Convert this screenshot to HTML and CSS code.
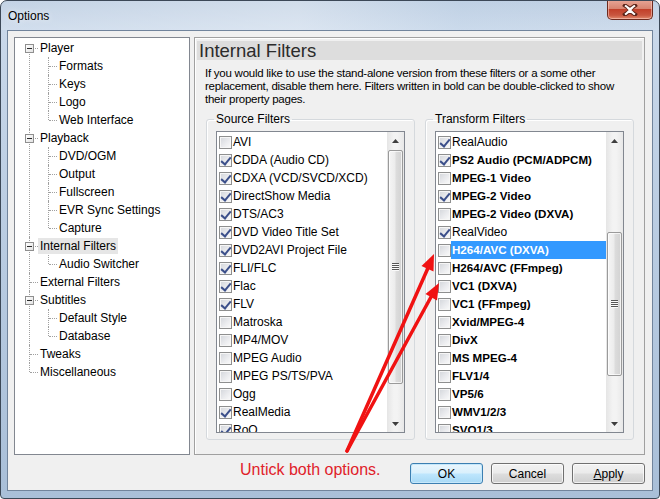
FILE: index.html
```html
<!DOCTYPE html>
<html>
<head>
<meta charset="utf-8">
<title>Options</title>
<link rel="stylesheet" href="styles.css">
</head>
<body>
<div class="window">
  <div class="titlebar">
    <span class="title">Options</span>
    <button class="close" aria-label="Close">
      <svg width="16" height="12" viewBox="0 0 16 12"><path d="M3 1.5 L8 5 L13 1.5 M3 10.5 L8 7 L13 10.5" fill="none" stroke="#5a2318" stroke-width="4" stroke-linecap="square"/><path d="M3 1.5 L8 5 L13 1.5 M3 10.5 L8 7 L13 10.5 M4 2 L12 10 M12 2 L4 10" fill="none" stroke="#fff" stroke-width="2"/></svg>
    </button>
  </div>
  <div class="client">
    <div class="main">
      <div class="treebox">
        <ul class="tree">
          <li><span class="exp"></span><div class="row"><span class="label">Player</span></div>
            <ul class="sub">
              <li><div class="row"><span class="label">Formats</span></div></li>
              <li><div class="row"><span class="label">Keys</span></div></li>
              <li><div class="row"><span class="label">Logo</span></div></li>
              <li><div class="row"><span class="label">Web Interface</span></div></li>
            </ul>
          </li>
          <li><span class="exp"></span><div class="row"><span class="label">Playback</span></div>
            <ul class="sub">
              <li><div class="row"><span class="label">DVD/OGM</span></div></li>
              <li><div class="row"><span class="label">Output</span></div></li>
              <li><div class="row"><span class="label">Fullscreen</span></div></li>
              <li><div class="row"><span class="label">EVR Sync Settings</span></div></li>
              <li><div class="row"><span class="label">Capture</span></div></li>
            </ul>
          </li>
          <li><span class="exp"></span><div class="row"><span class="label selected">Internal Filters</span></div>
            <ul class="sub">
              <li><div class="row"><span class="label">Audio Switcher</span></div></li>
            </ul>
          </li>
          <li><div class="row"><span class="label">External Filters</span></div></li>
          <li><span class="exp"></span><div class="row"><span class="label">Subtitles</span></div>
            <ul class="sub">
              <li><div class="row"><span class="label">Default Style</span></div></li>
              <li><div class="row"><span class="label">Database</span></div></li>
            </ul>
          </li>
          <li><div class="row"><span class="label">Tweaks</span></div></li>
          <li><div class="row"><span class="label">Miscellaneous</span></div></li>
        </ul>
      </div>
      <div class="panel">
        <div class="panel-head">Internal Filters</div>
        <p class="desc">If you would like to use the stand-alone version from these filters or a some other<br>replacement, disable them here. Filters written in bold can be double-clicked to show<br>their property pages.</p>
        <div class="groups">
          <fieldset class="group">
            <legend>Source Filters</legend>
            <div class="list">
              <div class="items">
                <div class="item"><span class="cb"></span><span class="text">AVI</span></div>
                <div class="item"><span class="cb on"></span><span class="text">CDDA (Audio CD)</span></div>
                <div class="item"><span class="cb on"></span><span class="text">CDXA (VCD/SVCD/XCD)</span></div>
                <div class="item"><span class="cb on"></span><span class="text">DirectShow Media</span></div>
                <div class="item"><span class="cb on"></span><span class="text">DTS/AC3</span></div>
                <div class="item"><span class="cb on"></span><span class="text">DVD Video Title Set</span></div>
                <div class="item"><span class="cb on"></span><span class="text">DVD2AVI Project File</span></div>
                <div class="item"><span class="cb on"></span><span class="text">FLI/FLC</span></div>
                <div class="item"><span class="cb on"></span><span class="text">Flac</span></div>
                <div class="item"><span class="cb on"></span><span class="text">FLV</span></div>
                <div class="item"><span class="cb"></span><span class="text">Matroska</span></div>
                <div class="item"><span class="cb"></span><span class="text">MP4/MOV</span></div>
                <div class="item"><span class="cb"></span><span class="text">MPEG Audio</span></div>
                <div class="item"><span class="cb"></span><span class="text">MPEG PS/TS/PVA</span></div>
                <div class="item"><span class="cb"></span><span class="text">Ogg</span></div>
                <div class="item"><span class="cb on"></span><span class="text">RealMedia</span></div>
                <div class="item"><span class="cb on"></span><span class="text">RoQ</span></div>
              </div>
              <div class="sb">
                <div class="sb-btn"><svg width="7" height="4" viewBox="0 0 7 4"><path d="M0 4 L3.5 0 L7 4 Z" fill="#3e3e3e"/></svg></div>
                <div class="sb-track"><div class="thumb" style="margin-top:1px;height:234px"><span class="grip"></span></div></div>
                <div class="sb-btn"><svg width="7" height="4" viewBox="0 0 7 4"><path d="M0 0 L7 0 L3.5 4 Z" fill="#3e3e3e"/></svg></div>
              </div>
            </div>
          </fieldset>
          <fieldset class="group">
            <legend>Transform Filters</legend>
            <div class="list">
              <div class="items">
                <div class="item"><span class="cb on"></span><span class="text">RealAudio</span></div>
                <div class="item bold"><span class="cb on"></span><span class="text">PS2 Audio (PCM/ADPCM)</span></div>
                <div class="item bold"><span class="cb"></span><span class="text">MPEG-1 Video</span></div>
                <div class="item bold"><span class="cb on"></span><span class="text">MPEG-2 Video</span></div>
                <div class="item bold"><span class="cb"></span><span class="text">MPEG-2 Video (DXVA)</span></div>
                <div class="item"><span class="cb on"></span><span class="text">RealVideo</span></div>
                <div class="item bold selected"><span class="cb"></span><span class="text">H264/AVC (DXVA)</span></div>
                <div class="item bold"><span class="cb"></span><span class="text">H264/AVC (FFmpeg)</span></div>
                <div class="item bold"><span class="cb"></span><span class="text">VC1 (DXVA)</span></div>
                <div class="item bold"><span class="cb"></span><span class="text">VC1 (FFmpeg)</span></div>
                <div class="item bold"><span class="cb"></span><span class="text">Xvid/MPEG-4</span></div>
                <div class="item bold"><span class="cb"></span><span class="text">DivX</span></div>
                <div class="item bold"><span class="cb"></span><span class="text">MS MPEG-4</span></div>
                <div class="item bold"><span class="cb"></span><span class="text">FLV1/4</span></div>
                <div class="item bold"><span class="cb"></span><span class="text">VP5/6</span></div>
                <div class="item bold"><span class="cb"></span><span class="text">WMV1/2/3</span></div>
                <div class="item bold"><span class="cb"></span><span class="text">SVQ1/3</span></div>
              </div>
              <div class="sb">
                <div class="sb-btn"><svg width="7" height="4" viewBox="0 0 7 4"><path d="M0 4 L3.5 0 L7 4 Z" fill="#3e3e3e"/></svg></div>
                <div class="sb-track"><div class="thumb" style="margin-top:83px;height:144px"><span class="grip"></span></div></div>
                <div class="sb-btn"><svg width="7" height="4" viewBox="0 0 7 4"><path d="M0 0 L7 0 L3.5 4 Z" fill="#3e3e3e"/></svg></div>
              </div>
            </div>
          </fieldset>
        </div>
      </div>
    </div>
    <div class="footer">
      <span class="note">Untick both options.</span>
      <div class="buttons">
        <button class="btn default">OK</button>
        <button class="btn">Cancel</button>
        <button class="btn"><u>A</u>pply</button>
      </div>
    </div>
  </div>
  <svg class="arrows" width="660" height="499" viewBox="0 0 660 499">
    <g stroke="#f01212" stroke-width="3.5" fill="none" stroke-linecap="round">
      <path d="M347 451 L428 268"/>
      <path d="M347 451 L431 297"/>
    </g>
    <g fill="#f01212">
      <path d="M434 254 L433.5 271.5 L421.5 266 Z"/>
      <path d="M439 283 L437 300.5 L425.5 294 Z"/>
    </g>
  </svg>
</div>
</body>
</html>
```

FILE: styles.css
```css
* { box-sizing: border-box; }
html, body { margin: 0; padding: 0; background: #ffffff; }
body {
  font-family: "Liberation Sans", Arial, sans-serif;
  font-size: 12px;
  color: #000;
}

.window {
  position: relative;
  width: 660px;
  height: 499px;
  border: 1px solid #3c4857;
  border-radius: 7px 7px 4px 4px;
  background: linear-gradient(to bottom, #b9cbe0 0%, #c9d8ea 6%, #bccee3 40%, #a9bfd8 100%);
  display: flex;
  flex-direction: column;
  overflow: hidden;
}

.titlebar {
  height: 29px;
  display: flex;
  align-items: center;
  flex: none;
  background: linear-gradient(to right, rgba(255,255,255,0.15) 0%, rgba(255,255,255,0.35) 45%, rgba(210,225,240,0.25) 70%, rgba(255,255,255,0.1) 100%);
}
.title {
  margin-left: 7px;
  font-size: 12px;
  color: #000;
  text-shadow: 0 0 6px rgba(255,255,255,0.9);
}
.close {
  margin-left: auto;
  margin-right: 6px;
  align-self: flex-start;
  margin-top: -1px;
  width: 46px;
  height: 20px;
  border: 1px solid #6d2a1e;
  border-top: none;
  border-radius: 0 0 5px 5px;
  background: linear-gradient(to bottom, #e8a697 0%, #d88470 45%, #c2402a 50%, #c9563f 80%, #e08a6d 100%);
  box-shadow: inset 0 0 0 1px rgba(255,210,200,0.55);
  display: flex;
  align-items: center;
  justify-content: center;
  padding: 0;
}

.client {
  flex: 1;
  margin: 0 6px 7px 6px;
  border: 1px solid #71849c;
  background: #f0f0f0;
  padding: 6px 7px 0 6px;
}

.main {
  display: flex;
  gap: 4px;
  height: 418px;
}

/* Tree */
.treebox {
  width: 176px;
  flex: none;
  border: 1px solid #828790;
  background: #fff;
}
.tree, .sub {
  list-style: none;
  margin: 0;
  padding: 0;
}
.tree { padding-top: 1px; }
.tree li { position: relative; }
.row {
  height: 18px;
  display: flex;
  align-items: center;
  padding-left: 23px;
}
.sub .row { padding-left: 42px; }
.label {
  padding: 0 2px;
  line-height: 16px;
  white-space: nowrap;
}
.label.selected { background: #e6e6e6; }

.tree > li::before {
  content: "";
  position: absolute;
  left: 14px;
  top: 0;
  bottom: 0;
  border-left: 1px dotted #a0a0a0;
}
.tree > li:first-child::before { top: 9px; }
.tree > li:last-child::before { bottom: auto; height: 9px; }
.tree > li::after {
  content: "";
  position: absolute;
  left: 15px;
  top: 9px;
  width: 8px;
  border-top: 1px dotted #a0a0a0;
}
.sub > li::before {
  content: "";
  position: absolute;
  left: 33px;
  top: 0;
  bottom: 0;
  border-left: 1px dotted #a0a0a0;
}
.sub > li:last-child::before { bottom: auto; height: 9px; }
.sub > li::after {
  content: "";
  position: absolute;
  left: 34px;
  top: 9px;
  width: 8px;
  border-top: 1px dotted #a0a0a0;
}
.exp {
  position: absolute;
  z-index: 1;
  left: 10px;
  top: 5px;
  width: 9px;
  height: 9px;
  border: 1px solid #8f8f8f;
  background: linear-gradient(135deg, #ffffff, #e2e2e2);
}
.exp::before {
  content: "";
  position: absolute;
  left: 1px;
  top: 3px;
  width: 5px;
  height: 1px;
  background: #2a2a2a;
}

/* Panel */
.panel {
  flex: 1;
  border: 1px solid #a0a0a0;
  box-shadow: inset 1px 1px 0 #ffffff;
  padding: 3px 2px 0 2px;
}
.panel-head {
  height: 19px;
  background: #dddddd;
  font-size: 18.5px;
  line-height: 19px;
  padding-left: 2px;
  color: #2b2b2b;
}
.desc {
  margin: 7px 0 0 8px;
  font-size: 11.5px;
  letter-spacing: -0.25px;
  line-height: 13px;
  white-space: nowrap;
}
.groups {
  display: flex;
  gap: 10px;
  margin: 7px 0 0 9px;
}
.group {
  margin: 0;
  width: 209px;
  min-width: 0;
  padding: 5px 9px 6px 9px;
  border: 1px solid #d5d9dd;
  border-radius: 3px;
  box-shadow: inset 1px 1px 0 #ffffff;
}
.group legend {
  padding: 0 2px;
  margin-left: -2px;
  line-height: 13px;
}

.list {
  height: 302px;
  border: 1px solid #828790;
  background: #fff;
  display: flex;
}
.items {
  flex: 1;
  min-width: 0;
  overflow: hidden;
  padding-top: 1px;
}
.item {
  height: 18px;
  display: flex;
  align-items: center;
  white-space: nowrap;
}
.item.bold { font-weight: bold; font-size: 11.6px; }
.item .text {
  flex: 1;
  line-height: 18px;
  padding-left: 1px;
}
.item.selected .text {
  background: #3399ff;
  color: #fff;
}
.cb {
  flex: none;
  width: 13px;
  height: 13px;
  margin-left: 2px;
  border: 1px solid #8e8f8f;
  background: linear-gradient(135deg, #d2d5da 0%, #eaebee 55%, #fbfbfb 100%);
  box-shadow: inset 0 0 0 1px #f6f6f6;
  position: relative;
}
.cb.on::after {
  content: "";
  position: absolute;
  left: 3px;
  top: 0px;
  width: 4px;
  height: 8px;
  border-right: 2px solid #3b4f8a;
  border-bottom: 2px solid #3b4f8a;
  transform: rotate(40deg);
}

/* Scrollbar */
.sb {
  width: 17px;
  flex: none;
  display: flex;
  flex-direction: column;
  background: linear-gradient(to right, #e5e5e5, #f3f3f3 40%, #f3f3f3 60%, #e8e8e8);
}
.sb-btn {
  height: 17px;
  flex: none;
  display: flex;
  align-items: center;
  justify-content: center;
}
.sb-track {
  flex: 1;
  padding: 0 1px;
}
.thumb {
  border: 1px solid #9a9a9a;
  border-radius: 2px;
  background: linear-gradient(to right, #f5f5f5 0%, #ececec 45%, #dcdcdc 55%, #d2d2d2 100%);
  box-shadow: inset 0 0 0 1px rgba(255,255,255,0.7);
  display: flex;
  align-items: center;
  justify-content: center;
}
.grip {
  width: 7px;
  height: 8px;
  background: repeating-linear-gradient(to bottom, #555 0, #555 1px, #fafafa 1px, #fafafa 2px);
}

/* Footer */
.footer {
  display: flex;
  align-items: flex-start;
  margin-top: 8px;
}
.note {
  margin-left: 226px;
  margin-top: -2px;
  font-size: 16px;
  line-height: 18px;
  color: #e0222a;
}
.buttons {
  margin-left: auto;
  display: flex;
  gap: 8px;
}
.btn {
  width: 73px;
  height: 21px;
  padding: 0;
  border: 1px solid #707070;
  border-radius: 3px;
  background: linear-gradient(to bottom, #f2f2f2 0%, #ebebeb 48%, #dddddd 52%, #cfcfcf 100%);
  box-shadow: inset 0 0 0 1px rgba(255,255,255,0.7);
  font-family: "Liberation Sans", Arial, sans-serif;
  font-size: 12px;
  color: #000;
}
.btn.default {
  border-color: #3c7fb1;
  background: linear-gradient(to bottom, #eaf6fd 0%, #d9f0fc 48%, #bee6fd 52%, #a7d9f5 100%);
  box-shadow: inset 0 0 0 1px #c6e8fb;
}

.arrows {
  position: absolute;
  left: -1px;
  top: -1px;
  pointer-events: none;
}
```
